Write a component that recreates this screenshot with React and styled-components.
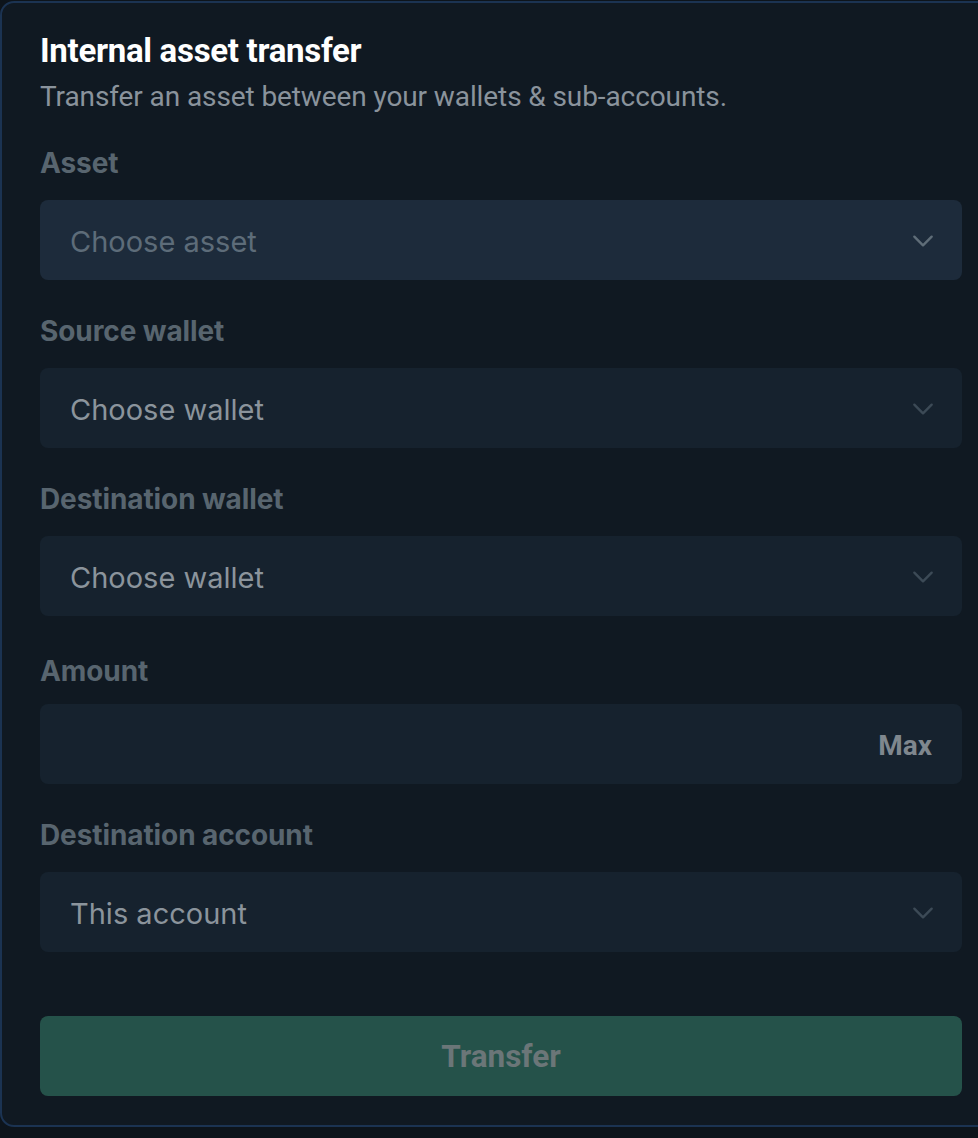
import React from "react";
import styled, { createGlobalStyle } from "styled-components";

const Global = createGlobalStyle`
  html, body { margin: 0; padding: 0; background: #0d141b; }
  body { font-family: Inter, "Noto Sans", sans-serif; overflow: hidden; }
  * { box-sizing: border-box; }
`;

const Viewport = styled.div`
  width: 978px;
  height: 1138px;
  overflow: hidden;
  padding-top: 1px;
`;

const Card = styled.section`
  width: 1004px;
  background: #101922;
  border: 2px solid #1b3352;
  border-radius: 14px;
  padding: 30px 40px 29px 38px;
  display: flex;
  flex-direction: column;
`;

const Title = styled.h1`
  margin: 0;
  font-family: Roboto, "Liberation Sans", sans-serif;
  font-weight: 700;
  font-size: 33px;
  line-height: 36px;
  color: #ffffff;
  letter-spacing: -0.3px;
`;

const Subtitle = styled.p`
  margin: 13px 0 0;
  font-family: Roboto, "Liberation Sans", sans-serif;
  font-size: 28px;
  line-height: 30px;
  color: #8a939c;
  letter-spacing: -0.1px;
`;

const Fields = styled.div`
  margin-top: 36px;
  display: flex;
  flex-direction: column;
  gap: 36px;
`;

const Field = styled.div`
  display: flex;
  flex-direction: column;
  gap: ${(p) => (p.$tight ? "18px" : "22px")};
  margin-top: ${(p) => (p.$tight ? "4px" : "0")};
`;

const Label = styled.label`
  font-family: Inter, sans-serif;
  font-weight: 700;
  font-size: 28px;
  line-height: 30px;
  color: #58656f;
  letter-spacing: -0.1px;
`;

const Box = styled.div`
  height: 80px;
  border-radius: 8px;
  background: ${(p) => (p.$active ? "#1d2b3b" : "#16222e")};
  display: flex;
  align-items: center;
  justify-content: space-between;
  padding: 2px 26px 0 30px;
`;

const Value = styled.span`
  font-family: Inter, sans-serif;
  font-size: 29px;
  color: ${(p) => (p.$muted ? "#5d6c79" : "#8b949c")};
`;

const Chevron = styled.svg`
  width: 26px;
  height: 26px;
  flex: none;
  color: ${(p) => (p.$active ? "#5f6d78" : "#3c4a56")};
`;

const Max = styled.span`
  margin-left: auto;
  margin-right: 4px;
  font-family: Roboto, "Liberation Sans", sans-serif;
  font-weight: 700;
  font-size: 28px;
  color: #7f878e;
`;

const Button = styled.button`
  margin-top: 64px;
  height: 80px;
  border: none;
  border-radius: 8px;
  background: #25524a;
  font-family: Roboto, "Liberation Sans", sans-serif;
  font-weight: 700;
  font-size: 31.5px;
  color: #6b7678;
  cursor: not-allowed;
`;

const ChevronIcon = ({ active }) => (
  <Chevron $active={active} viewBox="0 0 24 24" fill="none" stroke="currentColor" strokeWidth="2.2" strokeLinecap="round" strokeLinejoin="round">
    <path d="M4 8l8 8 8-8" />
  </Chevron>
);

const SelectField = ({ label, value, muted, active }) => (
  <Field>
    <Label>{label}</Label>
    <Box $active={active}>
      <Value $muted={muted}>{value}</Value>
      <ChevronIcon active={active} />
    </Box>
  </Field>
);

export default function App() {
  return (
    <>
      <Global />
      <Viewport>
        <Card>
          <Title>Internal asset transfer</Title>
          <Subtitle>Transfer an asset between your wallets &amp; sub-accounts.</Subtitle>
          <Fields>
            <SelectField label="Asset" value="Choose asset" muted active />
            <SelectField label="Source wallet" value="Choose wallet" />
            <SelectField label="Destination wallet" value="Choose wallet" />
            <Field $tight>
              <Label>Amount</Label>
              <Box>
                <Max>Max</Max>
              </Box>
            </Field>
            <SelectField label="Destination account" value="This account" />
          </Fields>
          <Button disabled>Transfer</Button>
        </Card>
      </Viewport>
    </>
  );
}
